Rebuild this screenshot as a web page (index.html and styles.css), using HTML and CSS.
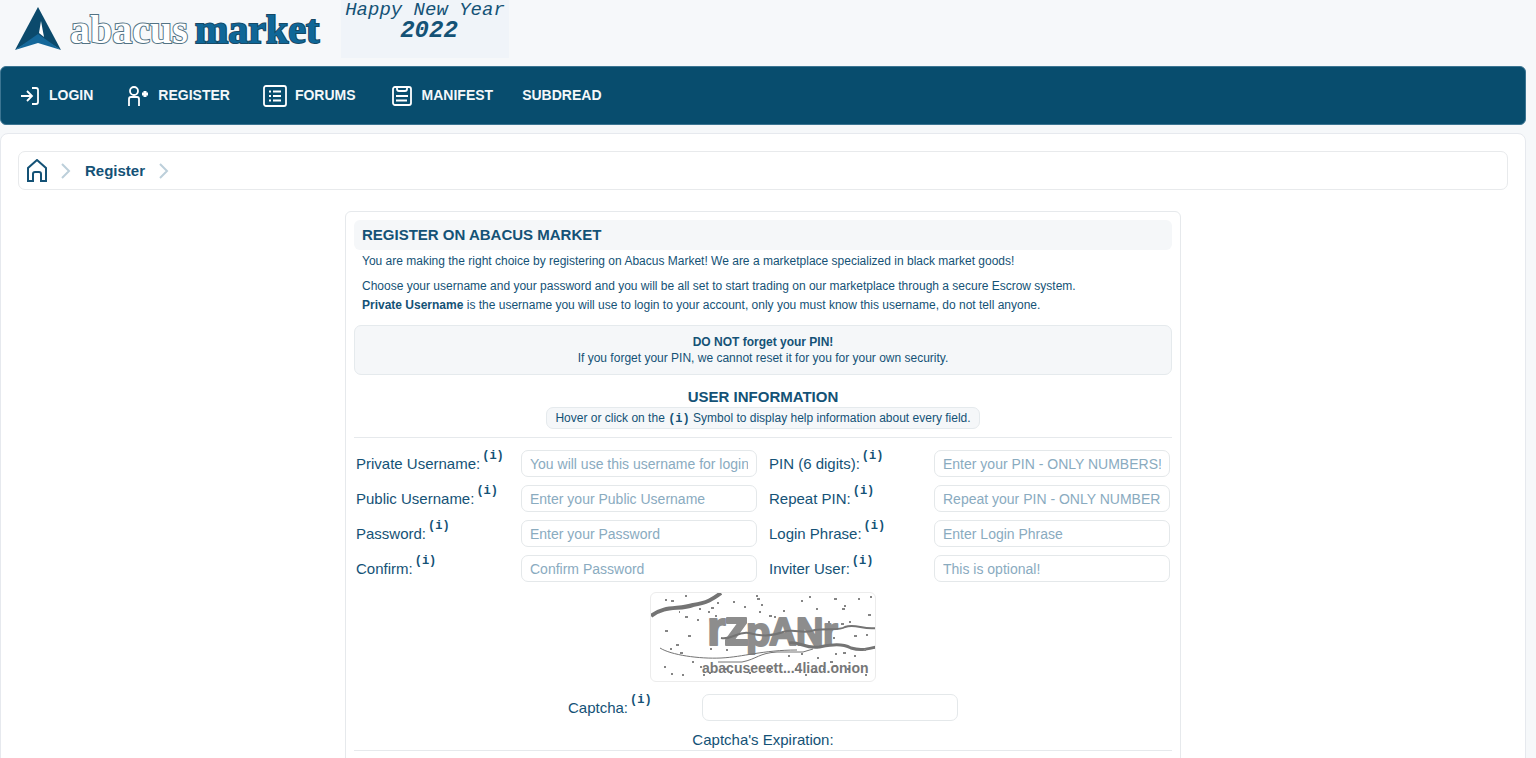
FILE: index.html
```html
<!DOCTYPE html>
<html lang="en">
<head>
<meta charset="utf-8">
<title>Register</title>
<link rel="stylesheet" href="styles.css">
</head>
<body>
<header class="top">
  <a class="logo" href="#" aria-label="abacus market">
    <svg width="330" height="58" viewBox="0 0 330 58">
      <path d="M38 7L15 50L38 36Z" fill="#0b4a6c"/>
      <path d="M38 7L61 50L38 36Z" fill="#0b4a6c"/>
      <path d="M15 50L38 34L61 50L38 43Z" fill="#15689a"/>
      <path d="M41 21L44 37L39 33Z" fill="#fff"/>
      <text x="70" y="43" class="logo-light">abacus</text>
      <text x="195" y="43" class="logo-dark">market</text>
    </svg>
  </a>
  <div class="greeting"><span>Happy New Year</span><strong>2022</strong></div>
</header>
<nav class="nav">
  <a href="#"><svg width="20" height="18" viewBox="0 0 20 18"><path d="M1 9H12M7 4L12 9L7 14M12 1H16Q18 1 18 3V15Q18 17 16 17H12"/></svg>LOGIN</a>
  <a href="#" class="nav-register"><svg width="22" height="20" viewBox="0 0 22 20"><circle cx="7" cy="5" r="4"/><path d="M2 20V13Q2 11 4 11H10Q12 11 12 13V20"/><path class="plus" d="M15 8H21M18 5V11"/></svg>REGISTER</a>
  <a href="#" class="nav-forums"><svg width="24" height="22" viewBox="0 0 24 22"><rect x="1" y="1" width="22" height="20" rx="2"/><path d="M6 6.500H8M6 11H8M6 15.500H8M10 6.500H18M10 11H18M10 15.500H18"/></svg>FORUMS</a>
  <a href="#" class="nav-manifest"><svg width="20" height="20" viewBox="0 0 20 20"><rect x="1" y="1" width="18" height="18" rx="2"/><path d="M5 1V3Q5 5 7 5H13Q15 5 15 3V1M4 10H16M4 14.500H15"/></svg>MANIFEST</a>
  <a href="#">SUBDREAD</a>
</nav>
<main class="page">
  <nav class="crumbs" aria-label="Breadcrumb">
    <a href="#" aria-label="Home"><svg class="home" width="20" height="23" viewBox="0 0 20 23"><path d="M1 22V9L10 1L19 9V22H14V15Q14 13 12 13H8Q6 13 6 15V22Z"/></svg></a>
    <svg class="chev" width="10" height="16" viewBox="0 0 10 16"><path d="M1 1L8 8L1 15"/></svg>
    <a href="#">Register</a>
    <svg class="chev" width="10" height="16" viewBox="0 0 10 16"><path d="M1 1L8 8L1 15"/></svg>
  </nav>
  <form class="card">
    <h1>REGISTER ON ABACUS MARKET</h1>
    <p class="intro">You are making the right choice by registering on Abacus Market! We are a marketplace specialized in black market goods!</p>
    <p class="intro details">Choose your username and your password and you will be all set to start trading on our marketplace through a secure Escrow system.<br><b>Private Username</b> is the username you will use to login to your account, only you must know this username, do not tell anyone.</p>
    <div class="notice"><b>DO NOT forget your PIN!</b><br>If you forget your PIN, we cannot reset it for you for your own security.</div>
    <div class="section">
      <h2>USER INFORMATION</h2>
      <p class="hint">Hover or click on the <b class="info">(i)</b> Symbol to display help information about every field.</p>
    </div>
    <div class="fields">
      <div class="field"><label for="priv">Private Username:<sup class="info">(i)</sup></label><input id="priv" type="text" placeholder="You will use this username for login"></div>
      <div class="field"><label for="pin">PIN (6 digits):<sup class="info">(i)</sup></label><input id="pin" type="password" placeholder="Enter your PIN - ONLY NUMBERS!"></div>
      <div class="field"><label for="pub">Public Username:<sup class="info">(i)</sup></label><input id="pub" type="text" placeholder="Enter your Public Username"></div>
      <div class="field"><label for="pin2">Repeat PIN:<sup class="info">(i)</sup></label><input id="pin2" type="password" placeholder="Repeat your PIN - ONLY NUMBERS!"></div>
      <div class="field"><label for="pass">Password:<sup class="info">(i)</sup></label><input id="pass" type="password" placeholder="Enter your Password"></div>
      <div class="field"><label for="phrase">Login Phrase:<sup class="info">(i)</sup></label><input id="phrase" type="text" placeholder="Enter Login Phrase"></div>
      <div class="field"><label for="conf">Confirm:<sup class="info">(i)</sup></label><input id="conf" type="password" placeholder="Confirm Password"></div>
      <div class="field"><label for="inv">Inviter User:<sup class="info">(i)</sup></label><input id="inv" type="text" placeholder="This is optional!"></div>
    </div>
    <svg class="captcha" width="226" height="90" viewBox="0 0 224 88">
      <g class="glyphs">
        <text x="56" y="52" font-size="48">r</text>
        <text x="73" y="52" font-size="50">z</text>
        <text x="95" y="53" font-size="40">p</text>
        <text x="118" y="52" font-size="38">A</text>
        <text x="145" y="52" font-size="38">N</text>
        <text x="172" y="52" font-size="38">r</text>
      </g>
      <g fill="none" stroke="#747474">
        <path stroke-width="4" d="M0 23C14 12 28 17 42 12C56 10 62 6 70 0"/>
        <path stroke-width="2" d="M70 45C82 47 86 38 98 40C112 44 122 43 132 39C144 35 152 42 164 37C178 35 188 38 194 34C204 30 212 37 225 35"/>
        <path stroke-width="3" d="M138 50C148 48 154 56 168 54C180 52 190 50 200 55C210 58 216 56 225 54"/>
        <path stroke-width="1" d="M9 55C20 62 48 66 70 65C92 64 112 57 146 57"/>
        <path stroke-width="1" d="M67 69H91C106 66 108 60 126 59H152L162 56"/>
      </g>
      <path class="specks" d="M14 7h2M34 3h2M20 8h3M28 19h1M34 24h3M46 27h2M14 38h3M37 43h3M25 52h3M19 56h2M29 60h3M13 74h2M20 81h2M31 82h2M41 69h2M49 74h2M52 82h2M58 80h2M74 76h3M82 9h2M93 14h2M106 6h3M110 12h2M108 19h2M118 23h3M123 24h2M105 3h2M132 18h2M150 8h2M158 4h2M165 16h2M183 6h3M191 16h3M193 13h2M207 6h2M219 4h2M217 22h3M198 29h2M190 31h3M203 43h3M215 42h2M213 57h2M203 63h2M192 60h3M184 61h2M179 69h3M166 65h2M150 61h2M137 63h2M98 80h2M79 80h2M118 77h2M144 76h2M154 82h2M163 79h2M172 76h2M183 73h3M196 76h2M214 82h2M60 15h3M57 19h2M66 10h2M48 16h2M64 23h2M177 29h2M182 45h2M59 56h2M75 57h2"/>
      <text class="mark" x="51" y="80">abacuseeett...4liad.onion</text>
    </svg>
    <div class="captcha-row"><label for="cap">Captcha:<sup class="info">(i)</sup></label><input id="cap" type="text"></div>
    <p class="expiry">Captcha's Expiration:</p>
  </form>
</main>
</body>
</html>
```
FILE: styles.css
```css
* { box-sizing: border-box; }
body {
  margin: 0;
  padding-right: 10px;
  background: #f6f8fa;
  color: #145276;
  font: 12px/19px "Liberation Sans", Arial, sans-serif;
  overflow: hidden;
}
a { color: inherit; text-decoration: none; }
h1, h2, p { margin: 0; }
svg { flex: none; }

.top { display: flex; gap: 11px; height: 66px; }
.logo svg { display: block; }
.logo text {
  font: bold 40px "Liberation Serif", serif;
  paint-order: stroke;
  stroke: #527384;
  stroke-width: 2px;
}
.logo .logo-light { fill: #fff; }
.logo .logo-dark { fill: #0f6798; stroke: #174965; }
.greeting {
  display: flex;
  flex-direction: column;
  align-items: center;
  width: 168px;
  height: 58px;
  background: #f0f4f9;
  font: italic 19px/20px "Liberation Mono", monospace;
}
.greeting strong { padding-left: 8px; font-size: 24px; line-height: 22px; }

.nav {
  display: flex;
  align-items: center;
  gap: 29px;
  height: 59px;
  padding: 0 19px;
  border: 1px solid #3c7592;
  border-radius: 6px;
  background: #084d6e;
  color: #f4f8fa;
  font-size: 14px;
  font-weight: bold;
}
.nav a { display: flex; align-items: center; gap: 9px; }
.nav svg { fill: none; stroke: #fff; stroke-width: 1.8; }
.nav .plus { stroke-width: 3; }
.nav .nav-register { padding-left: 5px; }
.nav .nav-forums { gap: 8px; padding-left: 4px; }
.nav .nav-manifest { gap: 10px; padding-left: 7px; }

.page {
  margin-top: 8px;
  padding: 17px;
  border: 1px solid #e6e9ee;
  border-radius: 8px;
  background: #fff;
}
.crumbs {
  display: flex;
  align-items: center;
  gap: 14px;
  height: 39px;
  padding: 0 8px;
  border: 1px solid #e8eaec;
  border-radius: 7px;
  font-size: 15px;
  font-weight: bold;
}
.crumbs a { display: flex; }
.crumbs svg { fill: none; stroke: #145276; stroke-width: 2; }
.crumbs .chev { stroke: #bccfda; }

.card {
  display: flex;
  flex-direction: column;
  width: 100%;
  max-width: 836px;
  margin: 21px auto 0;
  padding: 8px 8px 32px;
  border: 1px solid #e6e9ec;
  border-radius: 6px;
}
h1 {
  padding: 5px 8px;
  border-radius: 6px;
  background: #f5f7f9;
  font-size: 15px;
  line-height: 20px;
}
.intro { padding: 2px 8px 0; }
.details { margin-top: 4px; }
.notice {
  margin-top: 10px;
  padding: 8px;
  border: 1px solid #e5eaed;
  border-radius: 7px;
  background: #f5f7f9;
  line-height: 16px;
  text-align: center;
}
.section {
  display: flex;
  flex-direction: column;
  align-items: center;
  padding: 11px 0 8px;
  border-bottom: 1px solid #e6e9ec;
}
h2 { font-size: 15px; line-height: 21px; }
.hint {
  padding: 0 8px;
  border: 1px solid #e5eaed;
  border-radius: 7px;
  background: #f5f7f9;
  line-height: 20px;
}
.info { font: bold 12px/1 "Liberation Mono", monospace; }
.fields {
  display: grid;
  grid-template-columns: 1fr 1fr;
  gap: 8px 12px;
  padding: 12px 2px 0;
}
.field { display: grid; grid-template-columns: 165px 1fr; align-items: center; }
label { font-size: 15px; line-height: 27px; }
sup { margin-left: 2px; line-height: 0; vertical-align: 10px; }
input {
  width: 100%;
  min-width: 0;
  height: 27px;
  padding: 0 8px;
  border: 1px solid #e4e8ea;
  border-radius: 7px;
  background: #fff;
  color: #145276;
  font: 14px "Liberation Sans", Arial, sans-serif;
}
input::placeholder { color: #8aabbf; opacity: 1; }

.captcha {
  align-self: center;
  margin-top: 10px;
  border: 1px solid #ececec;
  border-radius: 6px;
}
.glyphs {
  fill: #8d8d8d;
  stroke: #8d8d8d;
  stroke-width: 2px;
  stroke-linejoin: round;
  font-family: "Liberation Sans", Arial, sans-serif;
  font-weight: bold;
}
.captcha .mark { fill: #777; font: bold 14px "Liberation Sans", Arial, sans-serif; }
.specks { fill: none; stroke: #858585; stroke-width: 2; }
.captcha-row {
  display: grid;
  grid-template-columns: 134px 256px;
  align-self: center;
  align-items: center;
  margin-top: 12px;
}
.expiry {
  margin-top: 9px;
  border-bottom: 1px solid #e6e9ec;
  font-size: 15px;
  line-height: 20px;
  text-align: center;
}
```
